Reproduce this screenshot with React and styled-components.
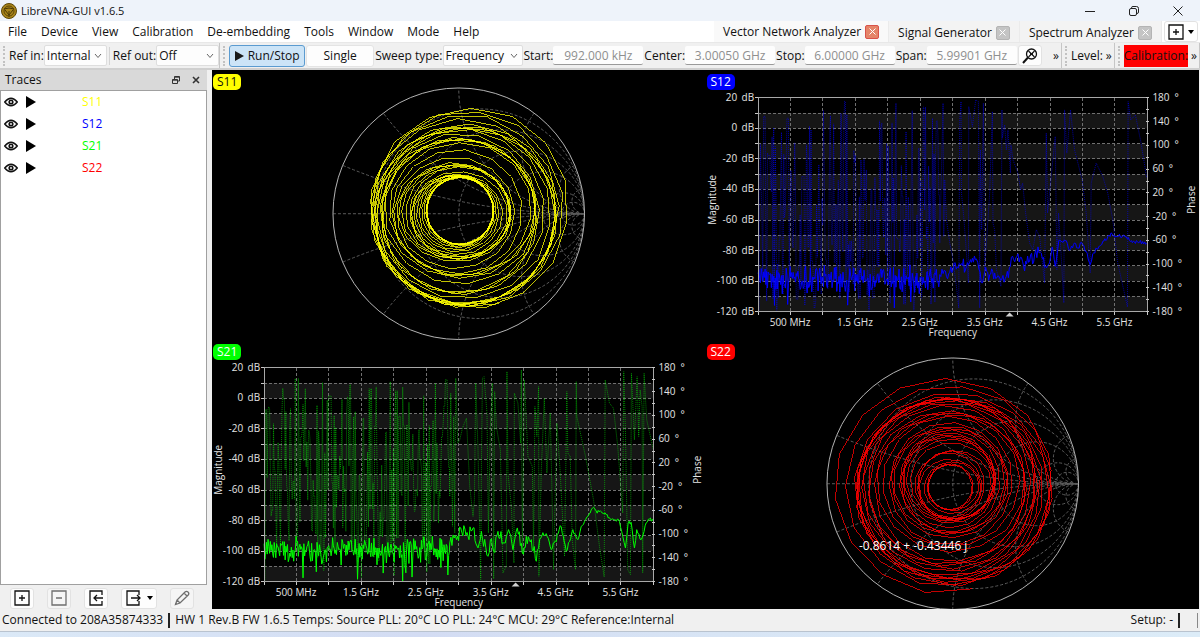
import React from "react";
import styled, { createGlobalStyle } from "styled-components";

const PLOT = { left: 52, right: 442, top: 28, bottom: 242 };
const WIDTH = PLOT.right - PLOT.left;
const HEIGHT = PLOT.bottom - PLOT.top;

const menus = [
  "File",
  "Device",
  "View",
  "Calibration",
  "De-embedding",
  "Tools",
  "Window",
  "Mode",
  "Help",
];

const modes = ["Vector Network Analyzer", "Signal Generator", "Spectrum Analyzer"];

const traces = [
  { name: "S11", color: "#ffff00" },
  { name: "S12", color: "#0000ff" },
  { name: "S21", color: "#00ff00" },
  { name: "S22", color: "#ff0000" },
];

// small seeded generator, so the noise floor is the same on each render
function createRandom(seed) {
  let state = seed;
  return () => {
    state = (state * 1664525 + 1013904223) % 4294967296;
    return state / 4294967296;
  };
}

// loops are bounding boxes: left, right, top, bottom (one unit circle = 378)
const s11Loops = [
  [-268, 346, -322, 283],
  [-260, 326, -314, 285],
  [-268, 310, -302, 280],
  [-270, 296, -293, 274],
  [-262, 295, -274, 280],
  [-256, 294, -268, 276],
  [-258, 292, -262, 272],
  [-250, 292, -258, 272],
  [-247, 270, -256, 255],
  [-238, 252, -250, 243],
  [-236, 238, -230, 241],
  [-232, 234, -227, 238],
  [-234, 235, -228, 205],
  [-226, 232, -225, 190],
  [-210, 230, -220, 186],
  [-200, 206, -198, 186],
  [-196, 176, -174, 180],
  [-186, 160, -154, 160],
  [-180, 158, -150, 138],
  [-172, 158, -148, 136],
  [-160, 156, -146, 138],
  [-146, 154, -144, 134],
  [-144, 152, -128, 132],
  [-142, 136, -120, 128],
  [-134, 124, -118, 118],
  [-126, 116, -118, 112],
  [-118, 108, -116, 106],
  [-110, 106, -114, 100],
  [-104, 105, -112, 96],
  [-98, 107, -112, 94],
  [-97, 104, -110, 92],
  [-99, 106, -113, 95],
  [-96, 103, -109, 91],
  [-98, 105, -111, 93],
];

const s22Loops = [
  [-366, 304, -322, 330],
  [-334, 302, -308, 310],
  [-300, 298, -284, 304],
  [-294, 294, -264, 298],
  [-292, 290, -260, 292],
  [-290, 270, -258, 288],
  [-284, 264, -262, 282],
  [-290, 252, -256, 278],
  [-276, 246, -254, 262],
  [-270, 250, -246, 256],
  [-258, 226, -240, 246],
  [-254, 222, -222, 242],
  [-236, 218, -216, 232],
  [-230, 216, -210, 198],
  [-212, 190, -208, 190],
  [-190, 170, -186, 184],
  [-186, 166, -174, 156],
  [-178, 162, -168, 152],
  [-158, 150, -164, 150],
  [-156, 132, -156, 142],
  [-152, 130, -148, 128],
  [-148, 128, -142, 114],
  [-138, 126, -136, 112],
  [-126, 122, -126, 108],
  [-112, 124, -100, 106],
  [-106, 100, -98, 110],
  [-104, 88, -94, 104],
  [-100, 86, -74, 98],
  [-82, 84, -66, 82],
  [-76, 64, -60, 80],
  [-74, 58, -58, 78],
];

// tails are [x, y] readings counted in thirds of a unit from the tail start
const s12Magnitude = [
  [0, 615], [20, 620], [40, 600], [62, 585], [80, 590], [95, 578], [110, 568],
  [118, 600], [128, 640], [135, 605], [150, 615], [165, 610], [180, 625],
  [200, 620], [212, 590], [222, 570], [232, 560], [252, 590], [270, 575],
  [285, 556], [302, 548], [318, 590], [330, 580], [338, 532], [347, 590],
  [358, 512], [380, 513], [390, 542], [405, 520], [415, 535], [426, 518],
  [440, 545], [452, 585], [460, 552], [490, 515], [518, 492], [530, 500],
  [550, 498], [570, 512], [600, 518], [622, 521],
];

const s12Phase = [
  [0, 520], [10, 100], [12, 500], [15, 330], [20, 450], [30, 520], [38, 560],
  [50, 650], [57, 715], [60, 150], [64, 95], [65, 370], [72, 440], [80, 550],
  [86, 640], [87, 110], [98, 170], [108, 90], [116, 95], [120, 715], [122, 240],
  [126, 480], [131, 100], [135, 600], [150, 370], [158, 125], [160, 460],
  [165, 480], [170, 600], [184, 650], [187, 120], [188, 205], [195, 165],
  [200, 240], [205, 180], [212, 310], [214, 225], [220, 270], [235, 310],
  [243, 360], [249, 340], [258, 430], [270, 520], [280, 540], [290, 480],
  [300, 500], [315, 640], [320, 190], [324, 430], [340, 270], [347, 200],
  [352, 600], [357, 430], [365, 560], [373, 700], [375, 120], [382, 250],
  [393, 120], [405, 240], [428, 330], [440, 430], [452, 610], [455, 340],
  [470, 280], [490, 320], [505, 370], [520, 450], [535, 580], [564, 712],
  [566, 95], [574, 150], [588, 135], [605, 220], [622, 325],
];

const s21Magnitude = [
  [0, 610], [20, 600], [33, 565], [55, 590], [70, 565], [85, 625], [95, 575],
  [115, 650], [122, 600], [132, 635], [145, 575], [160, 610], [180, 580],
  [190, 630], [203, 565], [218, 640], [230, 590], [245, 600], [260, 665],
  [270, 600], [290, 582], [305, 630], [335, 562], [350, 635], [370, 570],
  [385, 600], [395, 560], [405, 545], [415, 530], [432, 503], [440, 514],
  [455, 516], [470, 525], [485, 540], [510, 545], [520, 590], [528, 625],
  [536, 550], [545, 548], [555, 625], [562, 570], [575, 600], [590, 550],
  [600, 538], [612, 545],
];

const s21Phase = [
  [0, 470], [3, 160], [8, 560], [12, 230], [15, 580], [18, 115], [24, 310],
  [30, 300], [38, 265], [50, 235], [60, 440], [70, 530], [74, 480], [78, 130],
  [85, 330], [93, 720], [95, 380], [98, 115], [103, 110], [112, 220],
  [116, 580], [122, 260], [128, 130], [132, 718], [135, 155], [140, 260],
  [152, 330], [160, 700], [170, 680], [172, 95], [175, 400], [185, 500],
  [193, 670], [194, 160], [205, 190], [213, 310], [215, 90], [218, 640],
  [224, 120], [230, 240], [235, 350], [248, 380], [252, 640], [256, 200],
  [262, 290], [267, 140], [268, 710], [275, 390], [284, 175], [292, 400],
  [302, 220], [312, 690], [322, 250], [332, 400], [345, 650], [352, 155],
  [355, 340], [362, 350], [368, 600], [378, 690], [380, 125], [382, 230],
  [408, 350], [432, 480], [450, 620], [464, 712], [467, 120], [480, 190],
  [492, 205], [505, 320], [520, 520], [523, 95], [528, 270], [535, 690],
  [543, 705], [546, 100], [555, 300], [563, 110], [568, 290], [572, 150],
  [578, 200], [580, 700], [584, 100], [592, 240], [612, 330],
];

function loopPoints(loops, cx, cy, radius) {
  const random = createRandom(loops.length * 77);
  const scale = radius / 378;
  const steps = 15;
  let angle = 1.3;
  return loops.map((box, index) => {
    const next = loops[index + 1] || box;
    const points = [];
    for (let i = 0; i <= steps; i++) {
      const t = i / steps;
      const [l, r, top, b] = box.map((v, k) => v + (next[k] - v) * t);
      const wobble = 1 + (random() - 0.5) * 0.02;
      const x = (l + r) / 2 + ((r - l) / 2) * Math.cos(angle) * wobble;
      const y = (top + b) / 2 + ((b - top) / 2) * Math.sin(angle) * wobble;
      points.push(`${(cx + x * scale).toFixed(1)},${(cy + y * scale).toFixed(1)}`);
      if (i < steps) angle += (Math.PI * 2) / steps + 0.008;
    }
    return points.join(" ");
  });
}

function tracePoints(noise, tail, tailStart, jitter, random) {
  const points = [];
  for (let x = PLOT.left; x < tailStart; x += 0.78) {
    points.push([x, noise(x)]);
  }
  tail.forEach(([x, y], index) => {
    const next = tail[index + 1];
    points.push([tailStart + x / 3, y / 3]);
    if (next && jitter && next[0] - x > 4) {
      const count = Math.floor((next[0] - x) / 3);
      for (let i = 1; i < count; i++) {
        const t = i / count;
        const amount = x < 330 ? jitter : jitter * 0.3;
        points.push([
          tailStart + (x + (next[0] - x) * t) / 3,
          (y + (next[1] - y) * t) / 3 + (random() - 0.5) * amount,
        ]);
      }
    }
  });
  return points
    .map(([x, y]) => `${x.toFixed(1)},${Math.min(PLOT.bottom, y).toFixed(1)}`)
    .join(" ");
}

function SmithChart({ name, color, loops, readout }) {
  const cx = 247;
  const cy = 144;
  const radius = 126;
  const clip = `clip-${name}`;
  return (
    <Tile>
      <Badge $color={color} $dark={name === "S11"}>
        {name}
      </Badge>
      <Chart viewBox="0 0 494 270" role="img" aria-label={`${name} smith chart`}>
        <clipPath id={clip}>
          <circle cx={cx} cy={cy} r={radius} />
        </clipPath>
        <g clipPath={`url(#${clip})`} fill="none" stroke="#5c5c5c" strokeDasharray="3 2">
          <line x1={cx - radius} x2={cx + radius} y1={cy} y2={cy} />
          {[0.2, 0.5, 1, 2, 5, 10].map((value) => {
            const r = radius / (1 + value);
            return <circle key={value} cx={cx + radius - r} cy={cy} r={r} />;
          })}
          {[0.2, 0.5, 1, 2, 5, 10].map((value) => {
            const r = radius / value;
            return (
              <React.Fragment key={value}>
                <circle cx={cx + radius} cy={cy - r} r={r} />
                <circle cx={cx + radius} cy={cy + r} r={r} />
              </React.Fragment>
            );
          })}
        </g>
        <circle cx={cx} cy={cy} r={radius} fill="none" stroke="#b4b4b4" />
        <g fill="none" stroke={color} strokeOpacity="0.76" shapeRendering="crispEdges">
          {loopPoints(loops, cx, cy, radius).map((points, index) => (
            <polyline key={index} points={points} />
          ))}
        </g>
        {readout && (
          <Readout x="153" y="210">
            {readout}
          </Readout>
        )}
      </Chart>
    </Tile>
  );
}

function FrequencyChart({ name, color, magnitude, phase, tailStart, seed, dense }) {
  const random = createRandom(seed);
  const db = (value) => PLOT.top + ((20 - value) / 140) * HEIGHT;
  const noise = () => {
    const spike = random() > 0.92 ? random() * 18 : 0;
    return db(-99 - spike + (random() + random() - 1) * 10);
  };
  // columns differ in reach, so the noisy half is not one even block
  let reach = [0, 1];
  const phaseNoise = () => {
    if (random() > 0.35) {
      const top = random() * (dense ? 0.6 : 0.8);
      reach = [top, top + random() * (1 - top)];
    }
    return PLOT.top + HEIGHT * (random() > 0.5 ? reach[0] : reach[1]);
  };
  const rows = Array.from({ length: 15 }, (_, i) => PLOT.top + (HEIGHT / 14) * i);
  const columns = Array.from({ length: 13 }, (_, i) => PLOT.left + (WIDTH / 12) * i);
  const degrees = Array.from({ length: 19 }, (_, i) => PLOT.top + (HEIGHT / 18) * i);
  const labels = ["500 MHz", "1.5 GHz", "2.5 GHz", "3.5 GHz", "4.5 GHz", "5.5 GHz"];

  return (
    <Tile>
      <Badge $color={color}>{name}</Badge>
      <Chart viewBox="0 0 494 270" role="img" aria-label={`${name} over frequency`}>
        {rows.map(
          (y, i) =>
            i % 2 === 1 && (
              <rect key={y} x={PLOT.left} y={y} width={WIDTH} height={HEIGHT / 14} fill="#161616" />
            )
        )}
        <g stroke="#707070" strokeDasharray="3 2" shapeRendering="crispEdges">
          {rows.slice(1, -1).map((y) => (
            <line key={y} x1={PLOT.left} x2={PLOT.right} y1={y} y2={y} />
          ))}
          {columns.slice(1, -1).map((x) => (
            <line key={x} x1={x} x2={x} y1={PLOT.top} y2={PLOT.bottom} />
          ))}
        </g>
        <polyline
          points={tracePoints(phaseNoise, phase, tailStart, 0, random)}
          fill="none"
          stroke={color}
          strokeOpacity={dense ? 0.5 : 0.6}
          strokeDasharray="1 1"
        />
        <polyline
          points={tracePoints(noise, magnitude, tailStart, 14, random)}
          fill="none"
          stroke={color}
        />
        <g stroke="#c8c8c8" fill="none" shapeRendering="crispEdges">
          <rect x={PLOT.left} y={PLOT.top} width={WIDTH} height={HEIGHT} stroke="#a8a8a8" />
          {rows.map((y) => (
            <line key={y} x1={PLOT.left - 3} x2={PLOT.left} y1={y} y2={y} />
          ))}
          {degrees.map((y) => (
            <line key={y} x1={PLOT.right - 1} x2={PLOT.right + 2} y1={y} y2={y} />
          ))}
          {columns.map((x) => (
            <line key={x} x1={x} x2={x} y1={PLOT.bottom} y2={PLOT.bottom + 3} />
          ))}
        </g>
        <path d="M300 247L304 243L308 247Z" fill="#d0d0d0" />
        {[20, 0, -20, -40, -60, -80, -100, -120].map((value) => (
          <React.Fragment key={value}>
            <AxisText x="31" y={db(value) + 3} textAnchor="end">
              {value}
            </AxisText>
            <AxisText x="48" y={db(value) + 3} textAnchor="end">
              dB
            </AxisText>
          </React.Fragment>
        ))}
        {[180, 140, 100, 60, 20, -20, -60, -100, -140, -180].map((value) => (
          <AxisText key={value} x="447" y={PLOT.top + ((180 - value) / 360) * HEIGHT + 3}>
            {value}
            <tspan dx="5">°</tspan>
          </AxisText>
        ))}
        {labels.map((label, i) => (
          <AxisText key={label} x={84 + i * 65} y="256" textAnchor="middle">
            {label}
          </AxisText>
        ))}
        <AxisText x="247" y="267" textAnchor="middle">
          Frequency
        </AxisText>
        <AxisText transform="translate(10 130) rotate(-90)" textAnchor="middle">
          Magnitude
        </AxisText>
        <AxisText transform="translate(490 130) rotate(-90)" textAnchor="middle">
          Phase
        </AxisText>
      </Chart>
    </Tile>
  );
}

function Select({ label, value, $width }) {
  return (
    <Field>
      {label}
      <SelectWrap $width={$width}>
        <StyledSelect defaultValue={value}>
          <option>{value}</option>
        </StyledSelect>
        <Chevron viewBox="0 0 8 6" aria-hidden="true">
          <path d="M1 1L4 4.5L7 1" fill="none" stroke="#666666" />
        </Chevron>
      </SelectWrap>
    </Field>
  );
}

function BoxIcon({ children }) {
  return (
    <svg width="16" height="16" viewBox="0 0 16 16" fill="none" stroke="currentColor" strokeWidth="1.3" aria-hidden="true">
      {children}
    </svg>
  );
}

export default function App() {
  return (
    <>
      <GlobalStyle />
      <Screen>
        <TitleBar>
          <Logo viewBox="0 0 16 16" aria-hidden="true">
            <circle cx="8" cy="8" r="7.5" fill="#a8841a" stroke="#5d4708" />
            <circle cx="8" cy="8" r="5" fill="none" stroke="#5d4708" />
            <path d="M3 6Q8 4 13 6M4 7L8 12L12 7M8 8V14" fill="none" stroke="#4a3804" />
          </Logo>
          <Title>LibreVNA-GUI v1.6.5</Title>
          <WindowButton type="button" aria-label="Minimize">
            <svg width="10" height="10" viewBox="0 0 10 10" stroke="#222222">
              <path d="M0 5.5H10" />
            </svg>
          </WindowButton>
          <WindowButton type="button" aria-label="Restore">
            <svg width="10" height="10" viewBox="0 0 10 10" fill="none" stroke="#222222">
              <rect x="0.5" y="2.5" width="7" height="7" rx="1.5" />
              <path d="M2.5 2V1.8Q2.5 0.5 4 0.5H7.5Q9.5 0.5 9.5 2.5V6Q9.5 7.5 8 7.5" />
            </svg>
          </WindowButton>
          <WindowButton type="button" aria-label="Close">
            <svg width="10" height="10" viewBox="0 0 10 10" stroke="#222222">
              <path d="M0.5 0.5L9.5 9.5M9.5 0.5L0.5 9.5" />
            </svg>
          </WindowButton>
        </TitleBar>

        <MenuBar>
          <Menu>
            {menus.map((menu) => (
              <MenuButton type="button" key={menu}>
                {menu}
              </MenuButton>
            ))}
          </Menu>
          {modes.map((mode, index) => (
            <Tab key={mode} $active={index === 0}>
              <TabButton type="button">{mode}</TabButton>
              <TabClose type="button" aria-label={`Close ${mode}`} $active={index === 0}>
                <svg width="7" height="7" viewBox="0 0 7 7" stroke="#ffffff">
                  <path d="M0.5 0.5L6.5 6.5M6.5 0.5L0.5 6.5" />
                </svg>
              </TabClose>
            </Tab>
          ))}
          <AddMode type="button" aria-label="Add mode">
            <BoxIcon>
              <path d="M1 1H15V15H1ZM8 5V11M5 8H11" />
            </BoxIcon>
            <Arrow />
          </AddMode>
        </MenuBar>

        <ToolBar>
          <ToolGroup>
            <Handle />
            <Select label="Ref in:" value="Internal" $width="63px" />
            <Divider />
            <Select label="Ref out:" value="Off" $width="63px" />
          </ToolGroup>
          <ToolGroup $grow>
            <Handle />
            <RunButton type="button">
              <svg width="9" height="10" viewBox="0 0 9 10" aria-hidden="true">
                <path d="M0 0L9 5L0 10Z" fill="#1a1a1a" />
              </svg>
              Run/Stop
            </RunButton>
            <SingleButton type="button">Single</SingleButton>
            <Select label="Sweep type:" value="Frequency" $width="80px" />
            <Field>
              Start:
              <Value defaultValue="992.000 kHz" />
            </Field>
            <Field>
              Center:
              <Value defaultValue="3.00050 GHz" />
            </Field>
            <Field>
              Stop:
              <Value defaultValue="6.00000 GHz" />
            </Field>
            <Field>
              Span:
              <Value defaultValue="5.99901 GHz" />
            </Field>
            <IconButton type="button" aria-label="Full span">
              <svg width="16" height="16" viewBox="0 0 16 16" fill="none" stroke="#111111" strokeWidth="1.3">
                <circle cx="9.5" cy="6" r="5" />
                <path d="M1 15L6 9.5" strokeWidth="2" />
                <path d="M6.5 3L12.5 9M12.5 3L6.5 9M8 6H11" strokeWidth="1.1" />
              </svg>
            </IconButton>
            <More type="button" aria-label="More sweep settings">
              »
            </More>
          </ToolGroup>
          <ToolGroup>
            <Handle />
            Level:
            <More type="button" aria-label="More level settings">
              »
            </More>
          </ToolGroup>
          <ToolGroup>
            <Handle />
            <CalibrationState>Calibration:</CalibrationState>
            <More type="button" aria-label="More calibration settings">
              »
            </More>
          </ToolGroup>
        </ToolBar>

        <Main>
          <Dock>
            <DockTitle>
              <DockName>Traces</DockName>
              <DockButton type="button" aria-label="Float">
                <svg width="8" height="8" viewBox="0 0 8 8" fill="none" stroke="#333333">
                  <path d="M2.5 3V0.5H7.5V5H5.5M2.5 1.2H7.5M0.5 3.5H5.5V7.5H0.5ZM0.5 4.2H5.5" />
                </svg>
              </DockButton>
              <DockButton type="button" aria-label="Close traces">
                <svg width="8" height="8" viewBox="0 0 8 8" stroke="#333333" strokeWidth="1.6">
                  <path d="M1 1L7 7M7 1L1 7" />
                </svg>
              </DockButton>
            </DockTitle>
            <TraceList>
              {traces.map(({ name, color }) => (
                <TraceRow key={name}>
                  <svg width="14" height="10" viewBox="0 0 14 10" aria-hidden="true">
                    <path d="M0.7 5Q7 -2.6 13.3 5Q7 12.6 0.7 5Z" fill="none" stroke="#111111" strokeWidth="1.4" />
                    <circle cx="7" cy="5" r="2.6" fill="#111111" />
                    <circle cx="7" cy="5" r="0.9" fill="#ffffff" />
                  </svg>
                  <svg width="10" height="12" viewBox="0 0 10 12" aria-hidden="true">
                    <path d="M0 0L10 6L0 12Z" fill="#000000" />
                  </svg>
                  <TraceName $color={color}>{name}</TraceName>
                </TraceRow>
              ))}
            </TraceList>
            <DockTools>
              <IconButton type="button" aria-label="Add trace">
                <BoxIcon>
                  <path d="M1 1H15V15H1ZM8 5V11M5 8H11" />
                </BoxIcon>
              </IconButton>
              <IconButton type="button" aria-label="Remove trace" $muted>
                <BoxIcon>
                  <path d="M1 1H15V15H1ZM5 8H11" />
                </BoxIcon>
              </IconButton>
              <IconButton type="button" aria-label="Import">
                <BoxIcon>
                  <path d="M14 5V1H2V15H14V11M15 8H6M9 5L6 8L9 11" />
                </BoxIcon>
              </IconButton>
              <IconButton type="button" aria-label="Export" $wide>
                <BoxIcon>
                  <path d="M13 5V1H1V15H13V11M5 8H14M11 5L14 8L11 11" />
                </BoxIcon>
                <Arrow />
              </IconButton>
              <IconButton type="button" aria-label="Edit" $muted>
                <BoxIcon>
                  <path d="M1.5 14.5L3 10L11 2Q12.5 0.8 14 2T14.2 5L6 13ZM10 3L13 6M3 10L6 13" />
                </BoxIcon>
              </IconButton>
            </DockTools>
          </Dock>
          <Plots>
            <SmithChart name="S11" color="#ffff00" loops={s11Loops} />
            <FrequencyChart
              name="S12"
              color="#0000ff"
              magnitude={s12Magnitude}
              phase={s12Phase}
              tailStart={234}
              seed={12}
            />
            <FrequencyChart
              name="S21"
              color="#00ff00"
              magnitude={s21Magnitude}
              phase={s21Phase}
              tailStart={238}
              seed={21}
              dense
            />
            <SmithChart
              name="S22"
              color="#ff0000"
              loops={s22Loops}
              readout="-0.8614 + -0.43446 j"
            />
          </Plots>
        </Main>

        <StatusBar>
          <span>Connected to 208A35874333</span>
          <StatusMark />
          <StatusText>
            HW 1 Rev.B FW 1.6.5 Temps: Source PLL: 20°C LO PLL: 24°C MCU: 29°C
            Reference:Internal
          </StatusText>
          <span>Setup: -</span>
          <StatusMark />
          <StatusEnd />
        </StatusBar>
        <Desktop />
      </Screen>
    </>
  );
}

const GlobalStyle = createGlobalStyle`
  * {
    box-sizing: border-box;
  }

  body {
    margin: 0;
    font-family: "Open Sans", "Noto Sans", sans-serif;
    font-size: 12px;
    line-height: 16px;
    color: #111111;
  }

  button,
  input,
  select {
    margin: 0;
    padding: 0;
    border: none;
    background: none;
    font: inherit;
    color: inherit;
  }
`;

const Screen = styled.div`
  display: flex;
  flex-direction: column;
  height: 100vh;
  overflow: hidden;
  background-color: #f0f0f0;
  white-space: nowrap;
`;

const TitleBar = styled.header`
  display: flex;
  align-items: center;
  flex: 0 0 21px;
  background-color: #eef3fa;
`;

const Logo = styled.svg`
  width: 16px;
  height: 16px;
  margin: 0 4px 0 1px;
`;

const Title = styled.span`
  flex: 1;
  font-size: 11px;
`;

const WindowButton = styled.button`
  display: flex;
  align-items: center;
  justify-content: center;
  width: 44px;
  height: 20px;
`;

const MenuBar = styled.nav`
  display: flex;
  flex: 0 0 21px;
  background-color: #ffffff;
`;

const Menu = styled.div`
  display: flex;
  flex: 1;
  padding-left: 1px;
`;

const MenuButton = styled.button`
  padding: 0 7px;
`;

const Tab = styled.div`
  display: flex;
  align-items: center;
  gap: 4px;
  padding: 0 9px;
  background-color: ${({ $active }) => ($active ? "#f9f9f9" : "#f3f3f3")};
  border-right: 1px solid #ebebeb;
  padding-top: ${({ $active }) => ($active ? "0" : "2px")};
`;

const TabButton = styled.button`
  line-height: 16px;
`;

const TabClose = styled.button`
  display: flex;
  align-items: center;
  justify-content: center;
  width: 14px;
  height: 14px;
  border: 1px solid ${({ $active }) => ($active ? "#d9534a" : "#b4b4b4")};
  border-radius: 2px;
  background-color: ${({ $active }) => ($active ? "#e58468" : "#c4c4c4")};
`;

const AddMode = styled.button`
  display: flex;
  align-items: center;
  justify-content: center;
  gap: 4px;
  width: 34px;
  margin: 0 2px;
  border: 1px solid #e2e2e2;
  border-radius: 3px;
`;

const Arrow = styled.span`
  border: 3px solid transparent;
  border-top: 4px solid #000000;
  border-bottom: none;
`;

const ToolBar = styled.div`
  display: flex;
  flex: 0 0 28px;
  border-top: 1px solid #e8e8e8;
  border-bottom: 2px solid #cfcfcf;
`;

const ToolGroup = styled.div`
  display: flex;
  align-items: center;
  gap: 1px;
  flex: ${({ $grow }) => ($grow ? "1 1 0" : "0 0 auto")};
  min-width: 0;
  padding-left: 3px;
  border-right: 1px solid #c6c6c6;
`;

const Handle = styled.span`
  flex: 0 0 2px;
  height: 20px;
  margin-right: 3px;
  border-left: 2px dotted #c2c2c2;
`;

const Divider = styled.span`
  width: 1px;
  height: 18px;
  margin: 0 2px 0 1px;
  background-color: #d4d4d4;
`;

const Field = styled.label`
  display: flex;
  align-items: center;
`;

const SelectWrap = styled.span`
  display: flex;
  align-items: center;
  width: ${({ $width }) => $width};
  height: 21px;
  padding-right: 4px;
  border: 1px solid #dedede;
  border-radius: 2px;
  background-color: #fdfdfd;
`;

const StyledSelect = styled.select`
  flex: 1;
  min-width: 0;
  height: 19px;
  padding-left: 2px;
  appearance: none;
  outline: none;
`;

const Chevron = styled.svg`
  flex: 0 0 8px;
  height: 6px;
  pointer-events: none;
`;

const ToolButton = styled.button`
  display: flex;
  align-items: center;
  justify-content: center;
  gap: 4px;
  height: 22px;
  border-radius: 3px;
`;

const RunButton = styled(ToolButton)`
  flex: 0 0 76px;
  border: 1px solid #5b9bd0;
  background-color: #cce4f7;
`;

const SingleButton = styled(ToolButton)`
  flex: 0 0 68px;
  border: 1px solid #e4e4e4;
  background-color: #fdfdfd;
`;

const Value = styled.input`
  width: 90px;
  height: 19px;
  border-bottom: 1px solid #9a9a9a;
  border-radius: 2px;
  background-color: #fdfdfd;
  color: #8f8f8f;
  text-align: center;
`;

const IconButton = styled.button`
  display: flex;
  align-items: center;
  justify-content: center;
  gap: 5px;
  flex: 0 0 ${({ $wide }) => ($wide ? "36px" : "24px")};
  height: 21px;
  border: 1px solid #e2e2e2;
  border-radius: 3px;
  background-color: ${({ $muted }) => ($muted ? "#f5f5f5" : "#fdfdfd")};
  color: ${({ $muted }) => ($muted ? "#6e6e6e" : "#111111")};
`;

const More = styled.button`
  margin-left: auto;
  padding: 0 2px;
`;

const CalibrationState = styled.span`
  padding: 3px 0;
  background-color: #ff0000;
`;

const Main = styled.main`
  display: flex;
  flex: 1;
  min-height: 0;
`;

const Dock = styled.aside`
  display: flex;
  flex-direction: column;
  flex: 0 0 207px;
  margin-right: 5px;
`;

const DockTitle = styled.div`
  display: flex;
  align-items: center;
  flex: 0 0 20px;
  gap: 8px;
  padding: 0 5px;
  background-color: #d9d9d9;
`;

const DockName = styled.span`
  flex: 1;
`;

const DockButton = styled.button`
  display: flex;
  justify-content: center;
  width: 12px;
`;

const TraceList = styled.ul`
  flex: 1;
  margin: 0;
  padding: 0;
  list-style: none;
  border: 1px solid #a0a0a0;
  background-color: #ffffff;
`;

const TraceRow = styled.li`
  display: flex;
  align-items: center;
  gap: 8px;
  height: 22px;
  padding-left: 3px;
`;

const TraceName = styled.span`
  padding-left: 38px;
  color: ${({ $color }) => $color};
`;

const DockTools = styled.div`
  display: flex;
  align-items: center;
  flex: 0 0 24px;
  gap: 13px;
  padding: 2px 10px 0;
`;

const Plots = styled.section`
  display: grid;
  grid-template-columns: 1fr 1fr;
  grid-template-rows: 1fr 1fr;
  flex: 1;
  min-width: 0;
  margin-right: 1px;
  background-color: #000000;
`;

const Tile = styled.div`
  position: relative;
  display: flex;
  min-width: 0;
  min-height: 0;
`;

const Badge = styled.span`
  position: absolute;
  top: 4px;
  left: 1px;
  padding: 0 4px;
  border-radius: 5px;
  background-color: ${({ $color }) => $color};
  color: ${({ $dark }) => ($dark ? "#111111" : "#ffffff")};
`;

const Chart = styled.svg`
  width: 100%;
  height: 100%;
`;

const AxisText = styled.text`
  fill: #e4e4e4;
  font-size: 10px;
`;

const Readout = styled.text`
  fill: #ffffff;
  font-size: 12px;
`;

const StatusBar = styled.footer`
  display: flex;
  align-items: center;
  flex: 0 0 22px;
  gap: 5px;
  padding: 0 2px;
`;

const StatusMark = styled.span`
  width: 2px;
  height: 15px;
  background-color: #222222;
`;

const StatusText = styled.span`
  flex: 1;
`;

const StatusEnd = styled.span`
  width: 1px;
  height: 15px;
  margin-left: 12px;
  background-color: #888888;
`;

const Desktop = styled.div`
  flex: 0 0 6px;
  border-top: 1px solid #b9c3cf;
  background: linear-gradient(90deg, #dbe9f7, #d3dcf3 35%, #d8e5f5 60%, #dcecf8);
`;
